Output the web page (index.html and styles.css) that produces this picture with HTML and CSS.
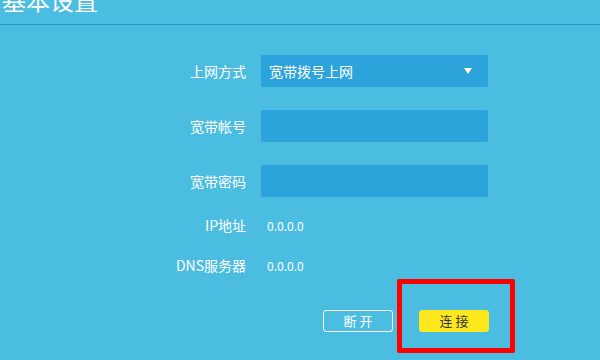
FILE: index.html
```html
<!DOCTYPE html>
<html lang="zh-CN">
<head>
    <meta charset="UTF-8">
    <title>基本设置</title>
    <link rel="stylesheet" href="styles.css">
</head>
<body>
<div class="header">
    <h1>基本设置</h1>
</div>

<div class="form">
    <div class="row field-row">
        <label>上网方式</label>
        <div class="select">
            <span>宽带拨号上网</span>
            <span class="arrow"></span>
        </div>
    </div>
    <div class="row field-row">
        <label>宽带帐号</label>
        <div class="input"></div>
    </div>
    <div class="row field-row">
        <label>宽带密码</label>
        <div class="input"></div>
    </div>
    <div class="row text-row ip-row">
        <label>IP地址</label>
        <span class="value">0.0.0.0</span>
    </div>
    <div class="row text-row dns-row">
        <label>DNS服务器</label>
        <span class="value">0.0.0.0</span>
    </div>
    <div class="row btn-row">
        <span></span>
        <div class="buttons">
            <button class="btn btn-off">断 开</button>
            <button class="btn btn-on">连 接</button>
        </div>
    </div>
</div>

<!-- 标注框 -->
<div class="mark"></div>
</body>
</html>
```

FILE: styles.css
```css
body {
    margin: 0;
    width: 600px;
    height: 360px;
    overflow: hidden;
    background-color: #4bbde1;
    color: #ffffff;
    font-family: "Noto Sans CJK SC", "Noto Sans", sans-serif;
    position: relative;
}
.header {
    padding: 0 0 12px 2px;
    border-bottom: 1px solid #2b8fd7;
}
h1 {
    margin: -12px 0 0 0;
    font-size: 24px;
    line-height: 24px;
    font-weight: normal;
}
.form {
    padding-top: 30px;
}
.row {
    display: grid;
    grid-template-columns: 246px 227px;
    column-gap: 15px;
    align-items: center;
}
.row label {
    text-align: right;
    font-size: 14px;
}
.field-row {
    height: 32px;
    margin-bottom: 23px;
}
.select, .input {
    height: 32px;
    background-color: #2ca3da;
    border-radius: 2px;
    box-sizing: border-box;
}
.select {
    display: flex;
    align-items: center;
    justify-content: space-between;
    padding: 0 16px 0 8px;
    font-size: 14px;
}
.arrow {
    width: 0;
    height: 0;
    border-left: 4px solid transparent;
    border-right: 4px solid transparent;
    border-top: 6px solid #ffffff;
}
.text-row {
    height: 20px;
}
.ip-row {
    margin-top: -5px;
}
.dns-row {
    margin-top: 20px;
}
.value {
    font-size: 12px;
    padding-left: 6px;
}
.btn-row {
    margin-top: 35px;
}
.buttons {
    display: flex;
    justify-content: flex-end;
    gap: 26px;
    margin-right: -1px;
}
.btn {
    width: 70px;
    height: 22px;
    border-radius: 3px;
    font-family: "Noto Sans CJK SC", "Noto Sans", sans-serif;
    font-size: 13px;
    line-height: 20px;
    padding: 0;
    box-sizing: border-box;
}
.btn-off {
    background: transparent;
    border: 1px solid #ffffff;
    color: #ffffff;
}
.btn-on {
    background-color: #fce81d;
    border: 1px solid #fce81d;
    color: #333333;
}
.mark {
    position: absolute;
    left: 397px;
    top: 279px;
    width: 118px;
    height: 74px;
    box-sizing: border-box;
    border: 5px solid #ff0000;
    border-radius: 2px;
}
```
